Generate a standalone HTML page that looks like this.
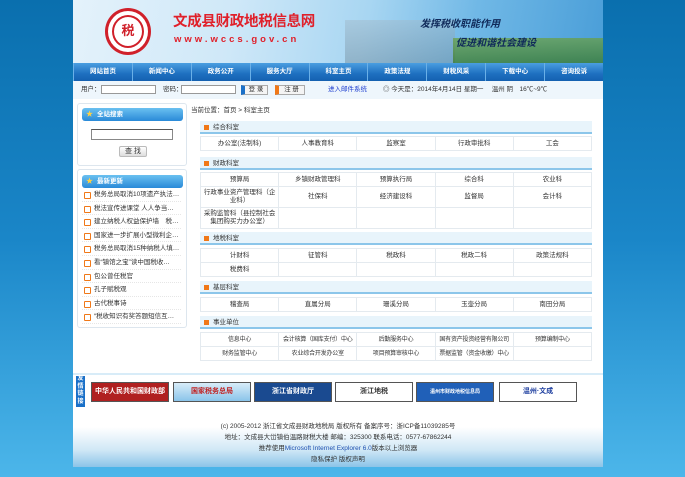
<!DOCTYPE html>
<html><head><meta charset="utf-8"><style>
*{margin:0;padding:0;box-sizing:border-box}
body{width:685px;height:477px;overflow:hidden;background:linear-gradient(#0a6fae,#1a86c8 50%,#4cb6ea);font-family:"Liberation Sans","Noto Sans CJK SC",sans-serif;font-size:7px;color:#333;position:relative}
.a{position:absolute}
#wrap{left:73px;top:0;width:530px;height:467px;background:#fff}
#hd{left:0;top:0;width:530px;height:63px;background:linear-gradient(100deg,#e4f2fb 0%,#cfe8f8 30%,#a8d6f2 55%,#70b8e6 75%,#4a9ed8 100%)}
#nav{left:0;top:63px;width:530px;height:18px;background:linear-gradient(#4a9ee0,#1e70c0 60%,#1460b0);display:flex}
#nav div{flex:1;color:#fff;font-weight:bold;text-align:center;line-height:18px;font-size:6.5px;border-left:1px solid #6ab0e8}
#lg{left:0;top:81px;width:530px;height:18px;background:#eef6fc;line-height:18px;font-size:6.5px}
.inp{display:inline-block;border:1px solid #999;background:#fff;height:9px;vertical-align:middle}
.box{border:1px solid #dde6ee;border-radius:3px;background:#fff}
.ph{background:linear-gradient(#6ac0f0,#2a8ad8);border-radius:3px;color:#fff;font-weight:bold;height:13px;line-height:13px;padding-left:15px;font-size:6.5px;position:absolute}
.ph:before{content:"★";color:#ffd040;position:absolute;left:4px;font-size:7px}
.li{position:absolute;left:4px;width:99px;height:13.6px;line-height:13.6px;border-bottom:1px dotted #e6e6e6;padding-left:12px;white-space:nowrap;overflow:hidden;font-size:6.5px}
.li:before{content:"";position:absolute;left:2px;top:4px;width:5px;height:5px;border:1.5px solid #f07818;border-radius:1px}
.sh{position:absolute;left:127px;width:392px;height:13px;background:#e8f4fb;border-bottom:2px solid #8cc6ea;line-height:13px;padding-left:13px;font-size:6.5px}
.sh:before{content:"";position:absolute;left:4px;top:4px;width:5px;height:5px;background:#f07818}
table{position:absolute;left:127px;width:392px;border-collapse:collapse;table-layout:fixed}
td{border:1px solid #e4eaef;text-align:center;font-size:6.5px;height:14px;line-height:8px;padding:0 1px}
.nw td{white-space:nowrap;font-size:6px;letter-spacing:-0.2px;overflow:hidden}
.bn{position:absolute;top:382px;height:20px;width:78px;border:1px solid #555;font-size:7px;font-weight:bold;text-align:center;line-height:18px}
.ft{position:absolute;left:0;width:530px;text-align:center;font-size:6.5px;color:#333}
</style></head><body>
<div class="a" id="wrap">
<div class="a" id="hd">
 <div class="a" style="left:272px;top:20px;width:110px;height:43px;background:linear-gradient(#a0b8c8,#708898);opacity:.45"></div>
 <div class="a" style="left:380px;top:38px;width:150px;height:25px;background:linear-gradient(#6aa048,#3a7a28);opacity:.75"></div>
 <div class="a" style="left:32px;top:8px;width:46px;height:47px;border-radius:50%;border:3px solid #d0202a;background:#fff"></div>
 <div class="a" style="left:39px;top:15px;width:32px;height:33px;border-radius:50%;border:2px solid #d0202a;color:#d0202a;font-size:13px;font-weight:bold;text-align:center;line-height:28px">税</div>
 <div class="a" style="left:100px;top:13px;color:#e0202a;font-size:14.5px;font-weight:bold;letter-spacing:-0.3px;line-height:18px">文成县财政地税信息网</div>
 <div class="a" style="left:101px;top:34px;color:#e0202a;font-size:9.5px;font-weight:bold;letter-spacing:3px;line-height:11px">www.wccs.gov.cn</div>
 <div class="a" style="left:347px;top:15px;color:#102a5a;font-size:10px;font-weight:bold;font-style:italic">发挥税收职能作用</div>
 <div class="a" style="left:383px;top:34px;color:#102a5a;font-size:10px;font-weight:bold;font-style:italic">促进和谐社会建设</div>
</div>
<div class="a" id="nav"><div>网站首页</div><div>新闻中心</div><div>政务公开</div><div>服务大厅</div><div>科室主页</div><div>政策法规</div><div>财税风采</div><div>下载中心</div><div>咨询投诉</div></div>
<div class="a" id="lg">
 <span class="a" style="left:8px">用户：</span><span class="a inp" style="left:28px;top:4px;width:55px"></span>
 <span class="a" style="left:90px">密码：</span><span class="a inp" style="left:108px;top:4px;width:55px"></span>
 <span class="a" style="left:168px;top:4px;width:27px;height:10px;border:1px solid #aaa;background:#f4f4f4;line-height:8px;text-align:center;border-left:4px solid #1a70c8">登 录</span>
 <span class="a" style="left:202px;top:4px;width:30px;height:10px;border:1px solid #aaa;background:#f4f4f4;line-height:8px;text-align:center;border-left:4px solid #f07818">注 册</span>
 <span class="a" style="left:255px;color:#2040d0">进入邮件系统</span>
 <span class="a" style="left:310px;color:#333">◎ 今天是：2014年4月14日 星期一　 温州 阴　16℃~9℃</span>
</div>
<div class="a box" style="left:4px;top:103px;width:110px;height:63px"></div>
<div class="ph" style="left:9px;top:108px;width:101px">全站搜索</div>
<div class="a" style="left:18px;top:129px;width:82px;height:11px;border:1px solid #888;border-top-color:#555"></div>
<div class="a" style="left:46px;top:146px;width:28px;height:11px;border:1px solid #bbb;border-radius:2px;background:linear-gradient(#fff,#ddd);text-align:center;line-height:9px">查 找</div>
<div class="a box" style="left:4px;top:169px;width:110px;height:159px"></div>
<div class="ph" style="left:9px;top:175px;width:101px">最新更新</div>
<div class="a" style="left:5px;top:188px">
<div class="li" style="top:0">税务总局取消10项遗产执法…</div>
<div class="li" style="top:13.6px">税法宣传进课堂 人人争当…</div>
<div class="li" style="top:27.2px">建立纳税人权益保护墙　税…</div>
<div class="li" style="top:40.8px">国家进一步扩展小型微利企…</div>
<div class="li" style="top:54.4px">税务总局取消15种纳税人填…</div>
<div class="li" style="top:68px">看“镇馆之宝”读中国税收…</div>
<div class="li" style="top:81.6px">包公曾任税官</div>
<div class="li" style="top:95.2px">孔子賦税观</div>
<div class="li" style="top:108.8px">古代税事诗</div>
<div class="li" style="top:122.4px">“税收知识有奖答题短信互…</div>
</div>
<div class="a" style="left:118px;top:104px;font-size:6.5px">当前位置：首页 &gt; 科室主页</div>
<div class="sh" style="top:121px">综合科室</div>
<table style="top:136px"><tr><td>办公室(法制科)</td><td>人事教育科</td><td>监察室</td><td>行政审批科</td><td>工会</td></tr></table>
<div class="sh" style="top:157px">财政科室</div>
<table style="top:172px"><tr><td>预算局</td><td>乡镇财政管理科</td><td>预算执行局</td><td>综合科</td><td>农业科</td></tr>
<tr><td style="height:21px">行政事业资产管理科（企业科）</td><td>社保科</td><td>经济建设科</td><td>监督局</td><td>会计科</td></tr>
<tr><td style="height:21px">采购监管科（县控制社会集团购买力办公室）</td><td></td><td></td><td></td><td></td></tr></table>
<div class="sh" style="top:232px">地税科室</div>
<table style="top:248px"><tr><td>计财科</td><td>征管科</td><td>税政科</td><td>税政二科</td><td>政策法规科</td></tr><tr><td>税费科</td><td></td><td></td><td></td><td></td></tr></table>
<div class="sh" style="top:281px">基层科室</div>
<table style="top:297px"><tr><td>稽查局</td><td>直属分局</td><td>珊溪分局</td><td>玉壶分局</td><td>南田分局</td></tr></table>
<div class="sh" style="top:316px">事业单位</div>
<table class="nw" style="top:332px"><tr><td>信息中心</td><td>会计核算（国库支付）中心</td><td>后勤服务中心</td><td>国有资产投资经营有限公司</td><td>预算编制中心</td></tr>
<tr><td>财务监管中心</td><td>农业综合开发办公室</td><td>项目预算审核中心</td><td>票据监管（资金收缴）中心</td><td></td></tr></table>
<div class="a" style="left:0;top:373px;width:530px;height:2px;background:#d8ecf8"></div>
<div class="a" style="left:3px;top:376px;width:9px;height:31px;background:#1a70c8;color:#fff;font-size:6px;line-height:7.5px;text-align:center;font-weight:bold">友情链接</div>
<div class="bn" style="left:18px;background:#b02020;color:#fff">中华人民共和国财政部</div>
<div class="bn" style="left:100px;background:linear-gradient(#d8ecf8,#8ac4ea);color:#c02020">国家税务总局</div>
<div class="bn" style="left:181px;background:#1a4a90;color:#fff">浙江省财政厅</div>
<div class="bn" style="left:262px;background:#fff;color:#333">浙江地税</div>
<div class="bn" style="left:343px;background:#2060b8;color:#fff;font-size:5px">温州市财政地税信息局</div>
<div class="bn" style="left:426px;background:#fff;color:#2040a0">温州·文成</div>
<div class="a" style="left:0;top:410px;width:530px;height:57px;background:linear-gradient(#fff 30%,#d0e8f6 70%,#8cc4e8)"></div>
<div class="ft" style="top:420px">(c) 2005-2012 浙江省文成县财政地税局 版权所有 备案序号：浙ICP备11039285号</div>
<div class="ft" style="top:431px">地址：文成县大峃镇伯温路财税大楼 邮编：325300 联系电话：0577-67862244</div>
<div class="ft" style="top:442px">推荐使用<span style="color:#2050b0">Microsoft Internet Explorer 6.0</span>版本以上浏览器</div>
<div class="ft" style="top:453px">隐私保护 版权声明</div>
</div>
</body></html>
